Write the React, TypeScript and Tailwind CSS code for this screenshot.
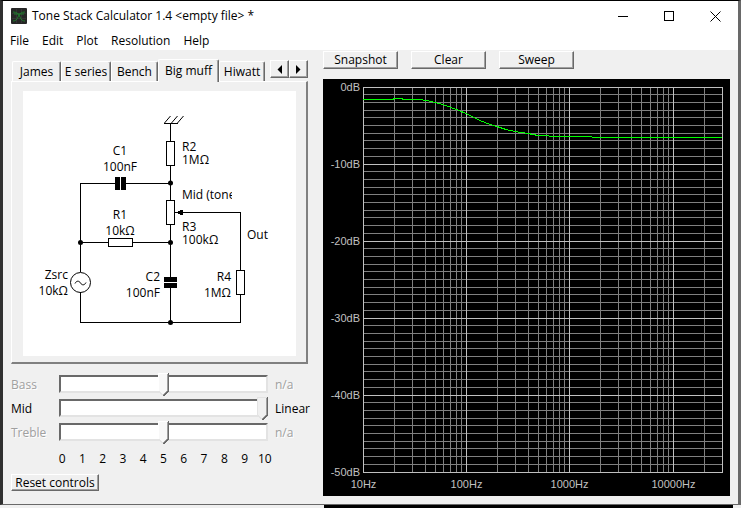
import { useState, type ReactNode } from "react";

const raised =
  "border border-t-white border-l-white border-r-[#696969] border-b-[#696969] shadow-[inset_-1px_-1px_0_#a0a0a0]";

function PushButton({ children }: { children: ReactNode }) {
  return (
    <button type="button" className={`flex h-[18px] w-[75px] items-center justify-center bg-[#f0f0f0] pb-px ${raised}`}>
      {children}
    </button>
  );
}

function TitleBar() {
  const control = "flex h-7 w-[46px] items-center justify-center";
  return (
    <header className="flex h-[30px] items-center bg-white pl-2">
      <svg width="16" height="16" viewBox="0 0 16 16" className="mr-[5px] shrink-0" aria-hidden="true">
        <rect width="16" height="16" rx="1" fill="#262626" />
        <path d="M1 5.500h14M1 10.500h14M5.500 1v14M10.500 1v14" stroke="#343434" fill="none" />
        <path d="M2 4C6 4 8 6 9 9S12 13 14 13M14 4C10 4 8 6 7 9S4 13 2 13M3 6h10" stroke="#1f7a2c" fill="none" />
      </svg>
      <h1 className="flex-1 whitespace-nowrap">Tone Stack Calculator 1.4 &lt;empty file&gt; *</h1>
      <button type="button" aria-label="Minimize" className={control}>
        <svg width="11" height="11" shapeRendering="crispEdges"><path d="M0 5.500h10" stroke="#000" /></svg>
      </button>
      <button type="button" aria-label="Maximize" className={control}>
        <svg width="11" height="11" shapeRendering="crispEdges"><path d="M.5.5h9v9h-9z" stroke="#000" fill="none" /></svg>
      </button>
      <button type="button" aria-label="Close" className={control}>
        <svg width="11" height="11"><path d="M.5.5l10 10M10.500.5l-10 10" stroke="#000" fill="none" /></svg>
      </button>
    </header>
  );
}

function MenuBar() {
  return (
    <nav className="flex h-[19px] items-center gap-[13px] bg-white pl-[7px]">
      {["File", "Edit", "Plot", "Resolution", "Help"].map((m) => (
        <button type="button" key={m}>{m}</button>
      ))}
    </nav>
  );
}

const tabs = [
  { name: "James", size: "w-[49px] h-5" },
  { name: "E series", size: "w-[50px] h-5" },
  { name: "Bench", size: "w-[47px] h-5" },
  { name: "Big muff", size: "w-[61px] h-[23px] pb-px", active: true },
  { name: "Hiwatt", size: "w-[46px] h-5" },
];

function TabStrip() {
  return (
    <div className="flex h-[21px] items-end pl-[1px]">
      <div role="tablist" className="flex flex-1 items-end">
        {tabs.map((t) => (
          <button
            key={t.name}
            type="button"
            role="tab"
            aria-selected={!!t.active}
            className={`${t.size} ${t.active ? "relative -mb-px" : ""} flex items-center justify-center rounded-t-[2px] border-t border-r border-l border-t-white border-r-[#696969] border-l-white bg-[#f0f0f0] whitespace-nowrap shadow-[inset_-1px_0_0_#a0a0a0]`}
          >
            {t.name}
          </button>
        ))}
      </div>
      {["M11 4v9L6.500 8.500z", "M6 4v9L10.500 8.500z"].map((d, i) => (
        <button
          key={d}
          type="button"
          aria-label={i ? "Next tabs" : "Previous tabs"}
          className={`mb-[3px] h-[18px] w-[19px] ${raised}`}
        >
          <svg width="17" height="16" viewBox="0 0 17 16"><path d={d} /></svg>
        </button>
      ))}
    </div>
  );
}

function Circuit() {
  return (
    <svg viewBox="23 91 273 265" className="block w-full bg-white" role="img" aria-label="Big muff tone stack schematic">
      <defs>
        <clipPath id="labelClip"><rect x="180" y="185" width="52" height="20" /></clipPath>
      </defs>
      <g stroke="#000" fill="none" shapeRendering="crispEdges">
        <path d="M80.500 272V183.500H115M126 183.500H170.500M170.500 123V141M164 123.500H178M170.500 166V200M170.500 225V277M170.500 288V322M80.500 292V322.500H240.500V295M240.500 270V212.500H175M80.500 242.500H108M133 242.500H170.500" />
        <path d="M166.500 141.500h8v24h-8zM166.500 200.500h8v24h-8zM236.500 270.500h8v24h-8zM108.500 238.500h24v8h-24z" />
        <path d="M115 177h5v13h-5zM121 177h5v13h-5zM164 277h13v5h-13zM164 283h13v5h-13z" fill="#000" stroke="none" />
        <path d="M175 212h3v-1h2v-1h3v5h-3v-1h-2v-1h-3z" fill="#000" stroke="none" />
      </g>
      <path d="M164.500 123l6-7M171.500 123l6-7M177.500 123l6-7" stroke="#000" fill="none" />
      <circle cx="80.500" cy="282.500" r="10" stroke="#000" fill="none" />
      <path d="M75 283.500c1.500-3 4-3 5.500-.5s4 2.500 5.500-.5" stroke="#000" fill="none" />
      <circle cx="170.500" cy="183" r="2.500" />
      <circle cx="170.500" cy="242.500" r="2.500" />
      <circle cx="80.500" cy="242.500" r="2.500" />
      <circle cx="170.500" cy="322.500" r="2.500" />
      <g className="text-[12px]">
        <g textAnchor="middle">
          <text x="120" y="155">C1</text>
          <text x="120" y="171">100nF</text>
          <text x="120" y="219">R1</text>
          <text x="120" y="235">10kΩ</text>
        </g>
        <text x="182" y="151">R2</text>
        <text x="182" y="164">1MΩ</text>
        <text x="182" y="199" clipPath="url(#labelClip)">Mid (tone)</text>
        <text x="182" y="231">R3</text>
        <text x="182" y="244">100kΩ</text>
        <text x="247" y="239">Out</text>
        <g textAnchor="end">
          <text x="68" y="279">Zsrc</text>
          <text x="68" y="295">10kΩ</text>
          <text x="160" y="281">C2</text>
          <text x="160" y="297">100nF</text>
          <text x="231" y="281">R4</text>
          <text x="231" y="297">1MΩ</text>
        </g>
      </g>
    </svg>
  );
}

function ControlSlider({ label, start, unit, disabled }: { label: string; start: number; unit: string; disabled?: boolean }) {
  const [value, setValue] = useState(start);
  const tone = disabled ? "text-[#a0a0a0] [text-shadow:1px_1px_0_#fff]" : "text-black";
  const id = `control-${label}`;
  return (
    <div className="flex h-6 items-center">
      <label htmlFor={id} className={`w-12 shrink-0 pt-[2px] ${tone}`}>{label}</label>
      <div className="relative h-[18px] w-[209px] shrink-0 border-2 border-t-[#696969] border-r-[#e3e3e3] border-b-[#e3e3e3] border-l-[#696969] bg-white">
        <div className="absolute -inset-x-[2px] -top-1 h-6">
          <svg
            width="11"
            height="23"
            viewBox="0 0 11 23"
            shapeRendering="crispEdges"
            className="absolute top-0"
            style={{ left: `calc((100% - 11px) * ${value / 10})` }}
          >
            <path d="M0 0h11v18l-5 5h-1l-5-5z" fill={disabled ? "#f8f8f8" : "#f0f0f0"} />
            <path d="M.5 18V.5H10" stroke={disabled ? "#fff" : "#e3e3e3"} fill="none" />
            <path d="M9.500 1v17l-4 4" stroke="#a0a0a0" fill="none" />
            <path d="M10.500 0v18l-5 5" stroke="#696969" fill="none" />
            <path d="M.5 18l4 4" stroke="#e3e3e3" fill="none" />
          </svg>
          <input
            id={id}
            type="range"
            min="0"
            max="10"
            value={value}
            disabled={disabled}
            onChange={(e) => setValue(Number(e.target.value))}
            className="absolute inset-0 h-full w-full opacity-0"
          />
        </div>
      </div>
      <output htmlFor={id} className={`pt-[2px] pl-[7px] ${tone}`}>{unit}</output>
    </div>
  );
}

const decade = 103.34;
const freqX = (f: number) => Math.floor(40 + decade * Math.log10(f / 10)) + 0.5;
const levelY = (db: number) => Math.floor(8 + 7.7 * db) + 0.5;

const freqs = [10, 100, 1000, 10000]
  .flatMap((d) => [1, 2, 3, 4, 5, 6, 7, 8, 9].map((k) => ({ f: d * k, major: k === 1 })))
  .filter((g) => g.f <= 30000);

const curve =
  "40,20.500 70,20.500 71,19.500 79,19.500 80,20.500 95,20.500 104,21.500 112,23.500 120,25.500 128,28.500 136,31.500 143,34.500 149,37.500 155,40.500 164,44.500 174,47.500 183,50.500 192,52.500 205,54.500 215,56.500 236,57.500 268,57.500 270,58.500 399,58.500";

function Plot() {
  const right = freqX(30000);
  const bottom = levelY(50);
  const levels = Array.from({ length: 51 }, (_, i) => i);
  return (
    <svg viewBox="0 0 407 417" className="block w-full bg-black" role="img" aria-label="Frequency response">
      <g shapeRendering="crispEdges">
        <g stroke="#808080">
          {levels.filter((l) => l % 10).map((l) => <line key={l} x1="40" x2={right} y1={levelY(l)} y2={levelY(l)} />)}
          {freqs.filter((g) => !g.major).map((g) => <line key={g.f} y1="8" y2={bottom} x1={freqX(g.f)} x2={freqX(g.f)} />)}
        </g>
        <g stroke="#c0c0c0">
          {levels.filter((l) => l % 10 === 0).map((l) => <line key={l} x1="40" x2={right} y1={levelY(l)} y2={levelY(l)} />)}
          {[10, 100, 1000, 10000, 30000].map((f) => <line key={f} y1="8" y2={bottom + 0.5} x1={freqX(f)} x2={freqX(f)} />)}
        </g>
        <polyline points={curve} stroke="#00ff00" fill="none" />
      </g>
      <g fill="#c0c0c0" className="font-['Liberation_Sans',sans-serif] text-[11px]">
        {[0, 10, 20, 30, 40, 50].map((l) => (
          <text key={l} x="37" y={levelY(l) + 3.5} textAnchor="end">{l ? -l : 0}dB</text>
        ))}
        {[10, 100, 1000, 10000].map((f) => (
          <text key={f} x={freqX(f)} y="409" textAnchor="middle">{f}Hz</text>
        ))}
      </g>
    </svg>
  );
}

export default function App() {
  return (
    <div className="min-h-screen bg-[#f0f0f0] font-['Open_Sans','Noto_Sans',sans-serif] text-[12px] leading-4 text-black">
      <div className="border-t border-r-[3px] border-b border-l-[3px] border-t-black border-r-[#696969] border-b-[#696969] border-l-[#303030] bg-[#f0f0f0]">
        <TitleBar />
        <MenuBar />
        <main className="flex items-start gap-[15px] px-2 pb-2">
          <section className="w-[297px] shrink-0 pt-[10px]">
            <TabStrip />
            <div role="tabpanel" className="border-t border-r-2 border-b-2 border-l border-t-white border-r-[#808080] border-b-[#808080] border-l-white pt-[9px] pr-[10px] pb-[6px] pl-[11px]">
              <Circuit />
            </div>
            <div className="pt-2">
              <ControlSlider label="Bass" start={5} unit="n/a" disabled />
              <ControlSlider label="Mid" start={10} unit="Linear" />
              <ControlSlider label="Treble" start={5} unit="n/a" disabled />
            </div>
            <div className="mt-[7px] ml-[41px] grid w-[223px] grid-cols-11 text-center">
              {Array.from({ length: 11 }, (_, i) => <span key={i}>{i}</span>)}
            </div>
            <button type="button" className={`mt-[7px] flex h-[17px] w-[88px] items-center justify-center whitespace-nowrap ${raised}`}>
              Reset controls
            </button>
          </section>
          <section className="min-w-0 flex-1 pt-px">
            <div className="mb-[10px] flex gap-[13px]">
              <PushButton>Snapshot</PushButton>
              <PushButton>Clear</PushButton>
              <PushButton>Sweep</PushButton>
            </div>
            <Plot />
          </section>
        </main>
      </div>
      <div className="mr-2 ml-[324px] h-[3px] bg-black" />
    </div>
  );
}
